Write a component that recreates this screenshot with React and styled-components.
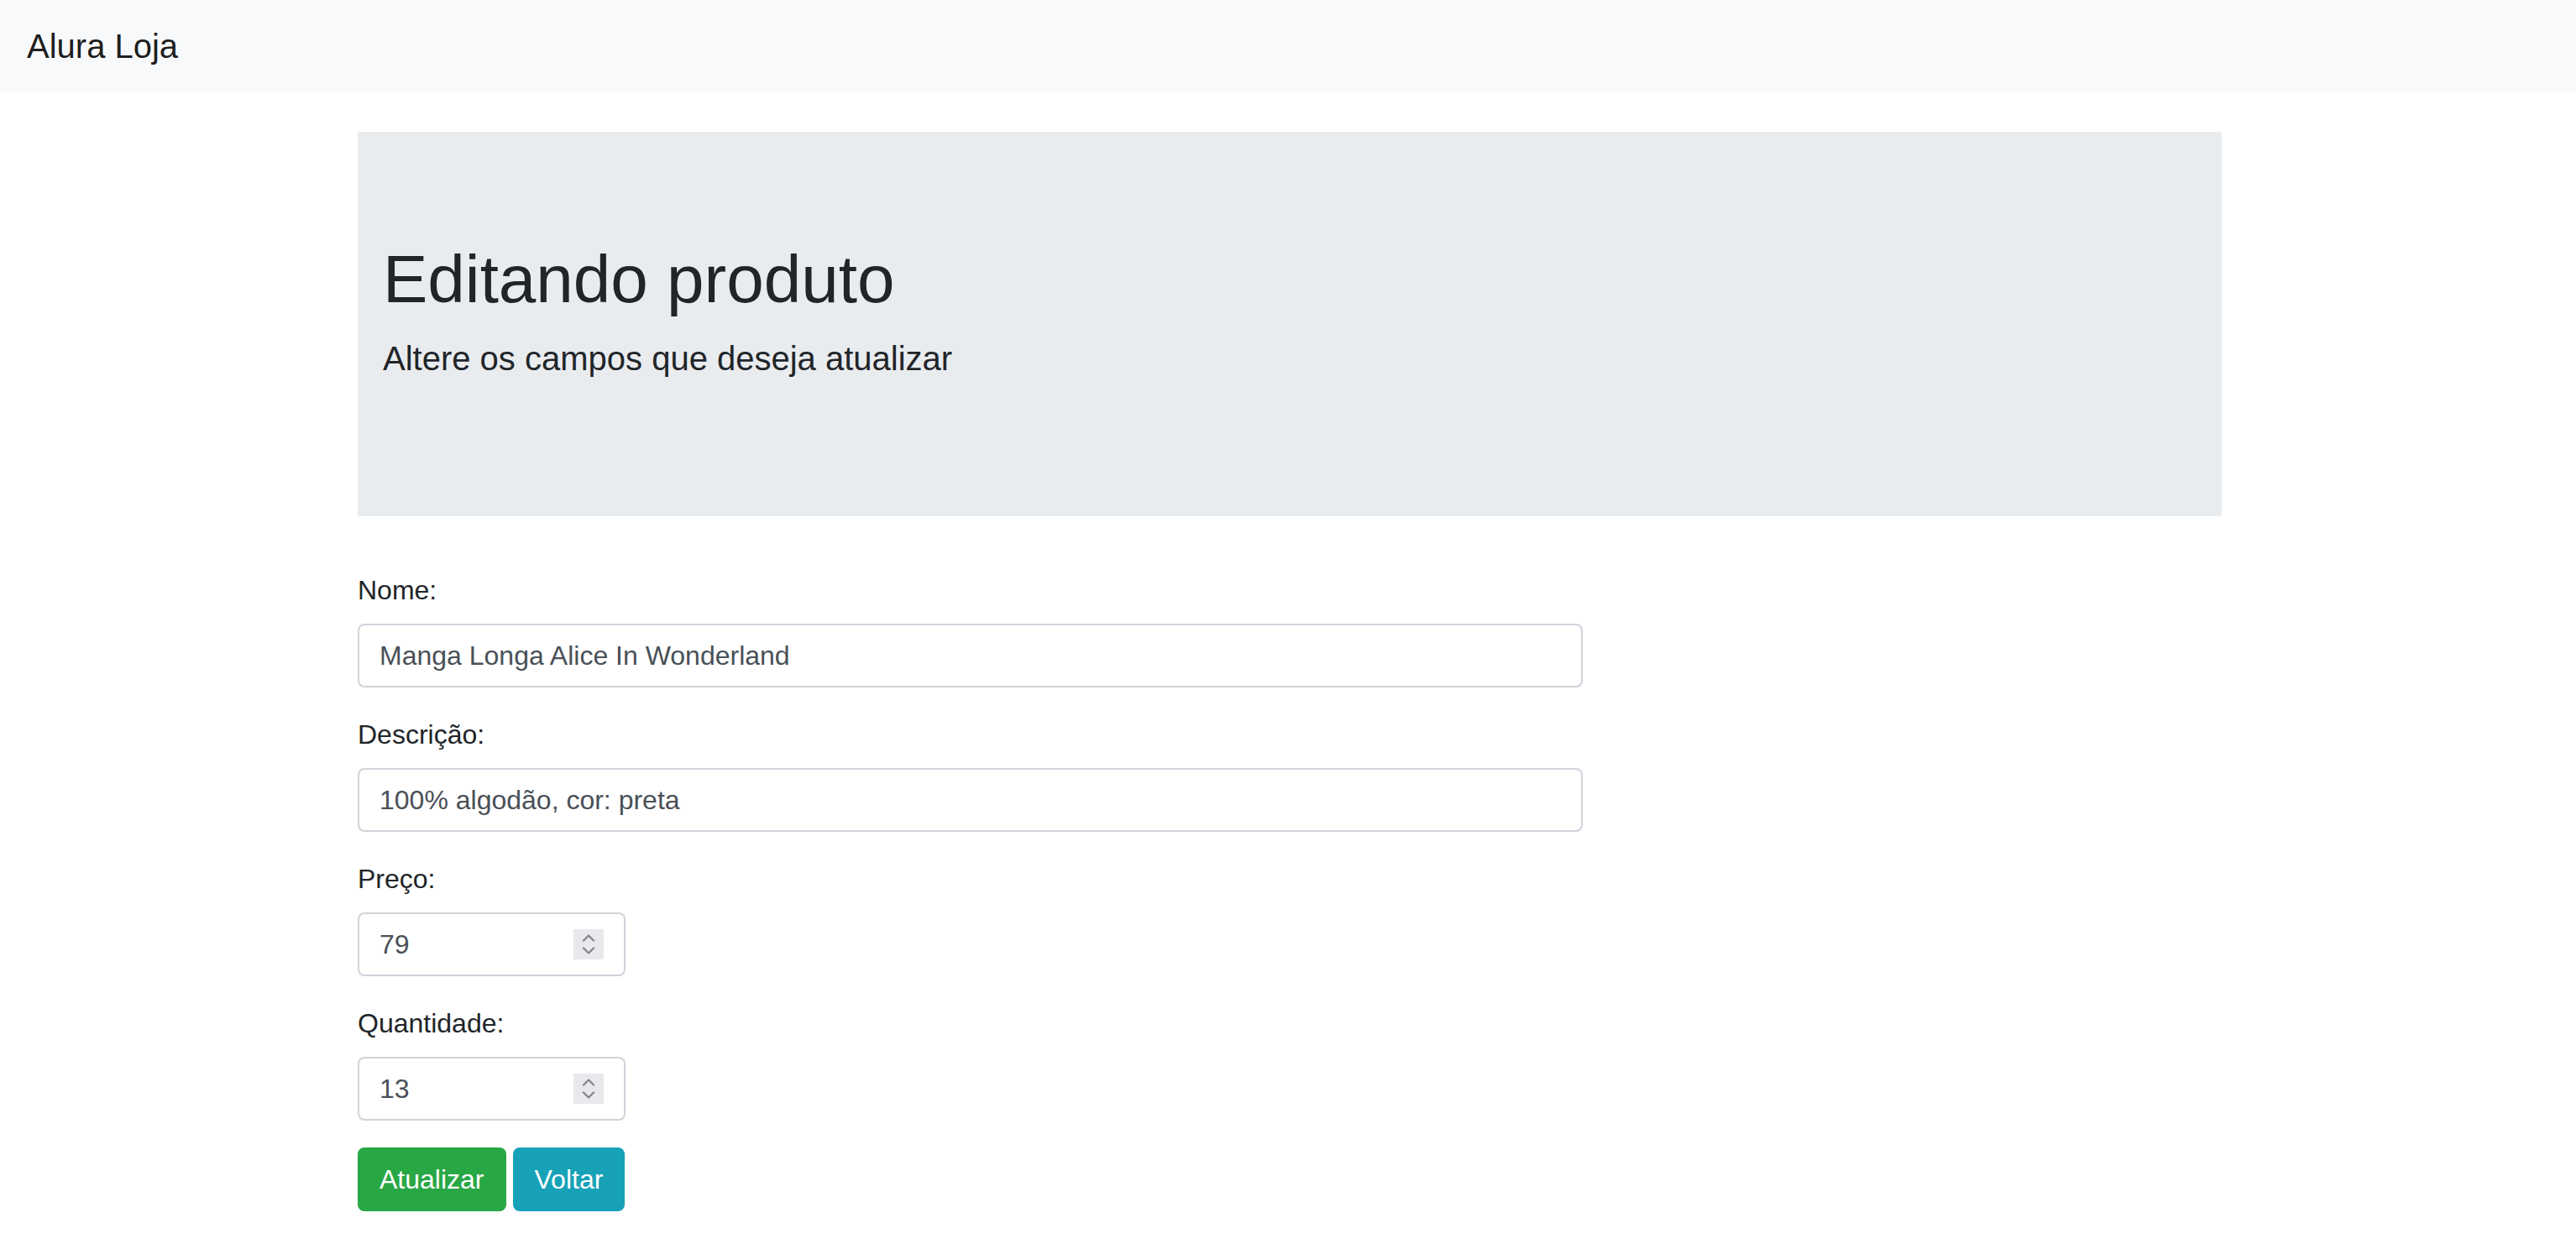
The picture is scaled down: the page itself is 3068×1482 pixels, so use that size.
import styled, { createGlobalStyle } from 'styled-components';

//= global =//
const GlobalStyle = createGlobalStyle`
    html, body {
        margin: 0;
        padding: 0;
        background: #fff;
    }
    body {
        font-family: "Liberation Sans", Arial, sans-serif;
        color: #212529;
        -webkit-font-smoothing: antialiased;
    }
    * { box-sizing: border-box; }
`;

//= navbar =//
const Navbar = styled.nav`
    height: 109px;
    padding: 0 32px;
    display: flex;
    align-items: center;
    background-color: #f8f9fa;
`;
const Brand = styled.a`
    font-size: 40px;
    line-height: 1.5;
    color: rgba(0, 0, 0, 0.9);
    text-decoration: none;
`;

//= page =//
const Container = styled.main`
    width: 2220px;
    margin: 48px 0 0 calc(50% - 1108px);
`;
const Jumbotron = styled.section`
    background-color: #e9ecef;
    padding: 128px 30px;
    margin-bottom: 64px;
`;
const Title = styled.h1`
    margin: 0 0 16px;
    font-size: 80px;
    font-weight: 500;
    line-height: 1.2;
`;
const Lead = styled.p`
    margin: 0 0 30px;
    font-size: 40px;
    font-weight: 300;
    line-height: 1.5;
`;

//= form =//
const Form = styled.form`
    display: flex;
    flex-direction: column;
    align-items: flex-start;
`;
const FormGroup = styled.div`
    margin-bottom: 32px;
`;
const Label = styled.label`
    display: block;
    margin-bottom: 16px;
    font-size: 32px;
    line-height: 1.5;
`;
const TextInput = styled.input`
    display: block;
    width: ${(p) => p.$width}px;
    height: 76px;
    padding: 12px 24px;
    font-family: inherit;
    font-size: 32px;
    line-height: 1.5;
    color: #495057;
    background: #fff;
    border: 2px solid #ced4da;
    border-radius: 8px;
    outline: none;
`;
const NumberField = styled.div`
    display: flex;
    align-items: center;
    width: ${(p) => p.$width}px;
    height: 76px;
    padding: 0 24px;
    background: #fff;
    border: 2px solid #ced4da;
    border-radius: 8px;
`;
const NumberInput = styled.input`
    flex: 1;
    min-width: 0;
    padding: 0;
    border: 0;
    outline: none;
    font-family: inherit;
    font-size: 32px;
    line-height: 1.5;
    color: #495057;
    background: transparent;
    -moz-appearance: textfield;
    &::-webkit-inner-spin-button,
    &::-webkit-outer-spin-button {
        -webkit-appearance: none;
        margin: 0;
    }
`;
const Spinner = styled.div`
    width: 36px;
    height: 36px;
    background: #e8e8ed;
    display: flex;
    flex-direction: column;
    align-items: center;
    justify-content: center;
    gap: 6px;
`;

//= buttons =//
const ButtonRow = styled.div`
    display: flex;
    gap: 8px;
`;
const colors = {
    success: '#28a745',
    info: '#17a2b8',
};
const Button = styled.button`
    height: 76px;
    padding: 12px 24px;
    font-family: inherit;
    font-size: 32px;
    line-height: 1.5;
    color: #fff;
    background-color: ${(p) => colors[p.$variant]};
    border: 2px solid ${(p) => colors[p.$variant]};
    border-radius: 8px;
    cursor: pointer;
`;

function Chevron({ down }) {
    return (
        <svg width="16" height="9" viewBox="0 0 16 9">
            <path
                d={down ? 'M2 1.5 L8 7.5 L14 1.5' : 'M2 7.5 L8 1.5 L14 7.5'}
                fill="none"
                stroke="#86868f"
                strokeWidth="2.4"
                strokeLinecap="round"
                strokeLinejoin="round"
            />
        </svg>
    );
}

function NumberControl({ id, value }) {
    return (
        <NumberField $width={319}>
            <NumberInput id={id} type="number" defaultValue={value} />
            <Spinner>
                <Chevron />
                <Chevron down />
            </Spinner>
        </NumberField>
    );
}

//= component definition =//
export default function App() {
    return (
        <>
            <GlobalStyle />
            <Navbar>
                <Brand href="#">Alura Loja</Brand>
            </Navbar>
            <Container>
                <Jumbotron>
                    <Title>Editando produto</Title>
                    <Lead>Altere os campos que deseja atualizar</Lead>
                </Jumbotron>
                <Form onSubmit={(e) => e.preventDefault()}>
                    <FormGroup>
                        <Label htmlFor="nome">Nome:</Label>
                        <TextInput id="nome" $width={1459} defaultValue="Manga Longa Alice In Wonderland" />
                    </FormGroup>
                    <FormGroup>
                        <Label htmlFor="descricao">Descrição:</Label>
                        <TextInput id="descricao" $width={1459} defaultValue="100% algodão, cor: preta" />
                    </FormGroup>
                    <FormGroup>
                        <Label htmlFor="preco">Preço:</Label>
                        <NumberControl id="preco" value={79} />
                    </FormGroup>
                    <FormGroup>
                        <Label htmlFor="quantidade">Quantidade:</Label>
                        <NumberControl id="quantidade" value={13} />
                    </FormGroup>
                    <ButtonRow>
                        <Button type="submit" $variant="success">Atualizar</Button>
                        <Button type="button" $variant="info">Voltar</Button>
                    </ButtonRow>
                </Form>
            </Container>
        </>
    );
}
